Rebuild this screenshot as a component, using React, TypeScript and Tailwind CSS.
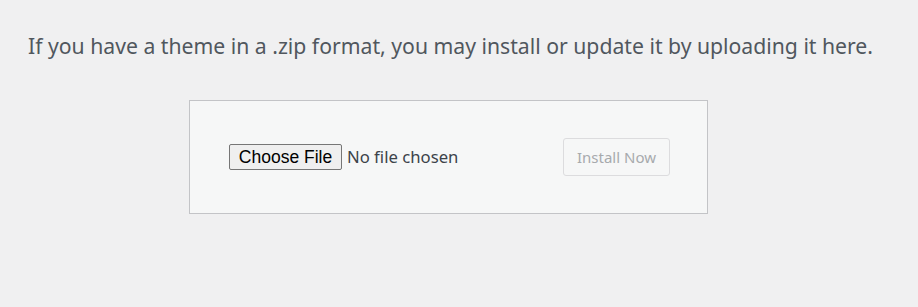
export default function App() {
  return (
    <div className="min-h-[307px] w-full bg-[#f0f0f1] pt-[33px] font-['Noto_Sans','Open_Sans',sans-serif] text-[#50575e]">
      <p className="ml-[28px] text-[21.2px] leading-[26px]">
        If you have a theme in a .zip format, you may install or update it by uploading it here.
      </p>
      <div className="ml-[189px] mt-[41px] flex h-[114px] w-[519px] items-center justify-between border border-[#c3c4c7] bg-[#f6f7f7] pl-[39px] pr-[37px]">
        <div className="flex items-center gap-[5px]">
          <button className="flex h-[26px] w-[113px] items-center justify-center rounded-[2px] border border-[#767676] bg-[#efefef] pt-[1px] font-['Liberation_Sans',Arial,sans-serif] text-[17.5px] leading-none text-black">
            Choose File
          </button>
          <span className="text-[16.7px] text-[#3c434a]">No file chosen</span>
        </div>
        <button className="h-[38px] w-[107px] rounded-[3px] border border-[#dcdcde] bg-[#f6f7f7] text-[15px] text-[#a7aaad]">
          Install Now
        </button>
      </div>
    </div>
  );
}
